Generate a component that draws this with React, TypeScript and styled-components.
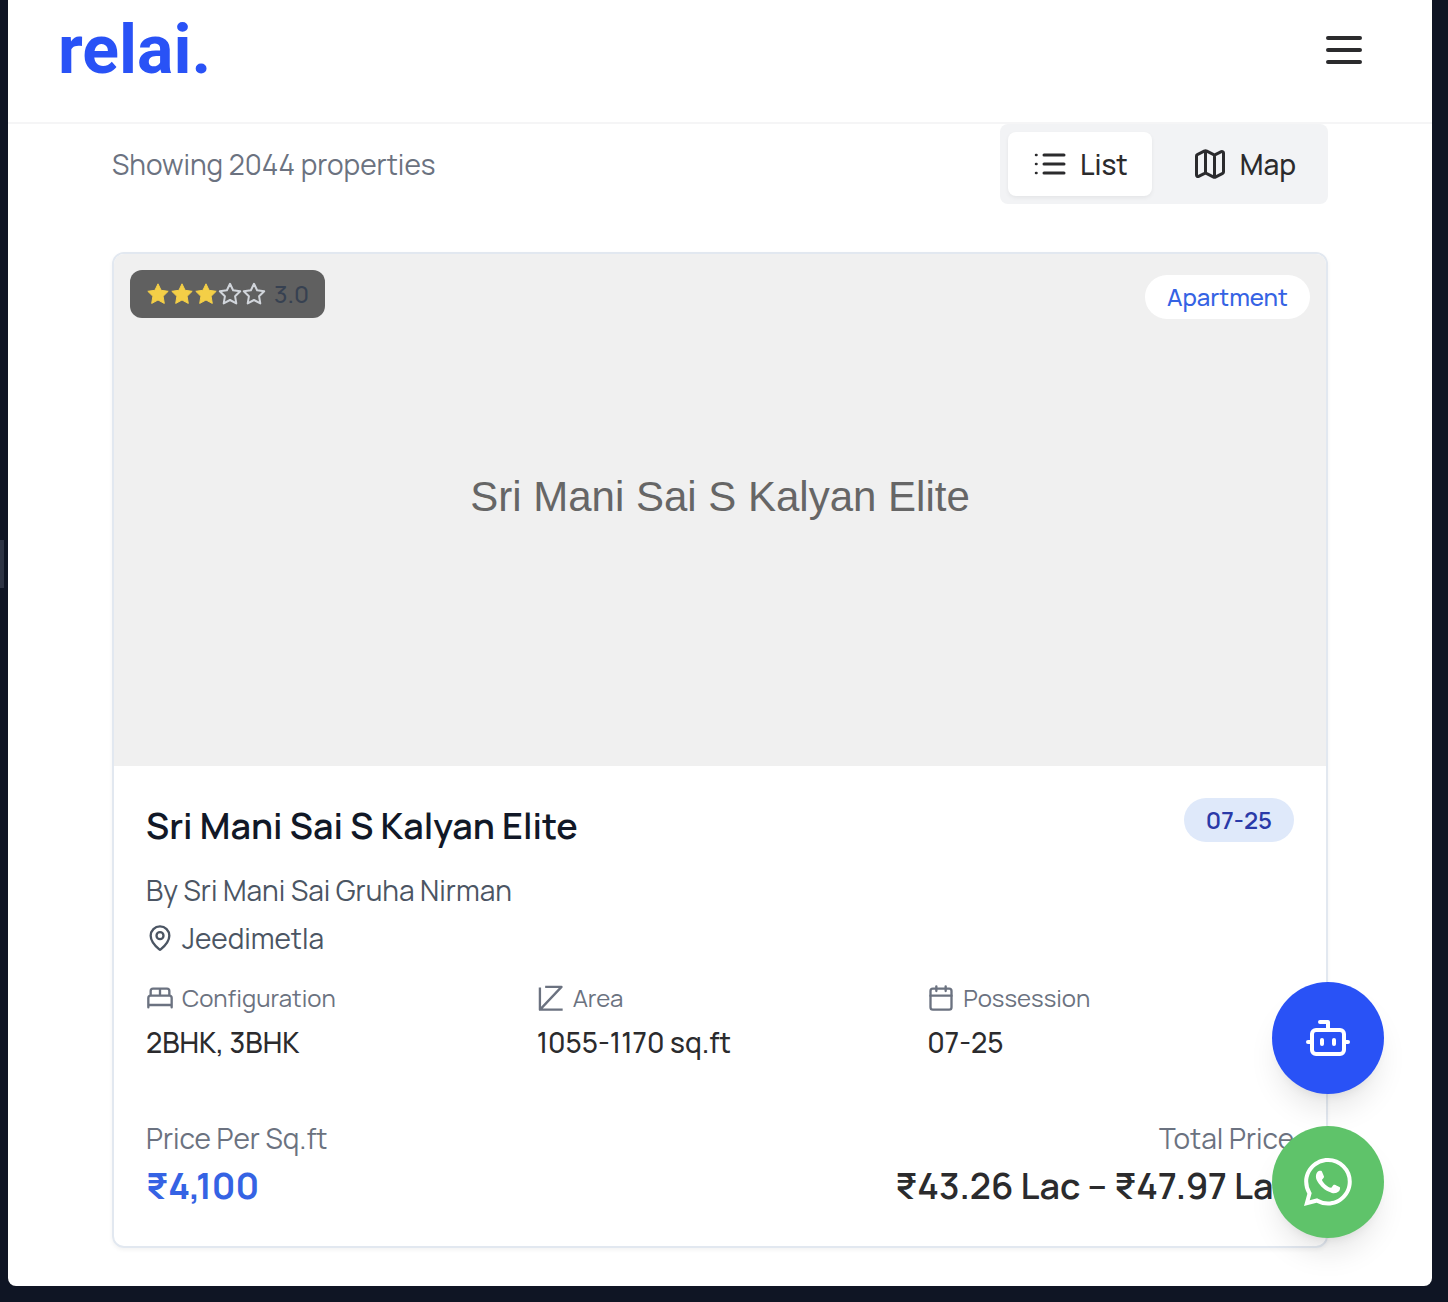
import React from "react";
import styled, { createGlobalStyle } from "styled-components";
import { Bot } from "lucide-react";
import { BsWhatsapp } from "react-icons/bs";

const GlobalStyle = createGlobalStyle`
  *, *::before, *::after { box-sizing: border-box; }
  body {
    margin: 0;
    background: #0f1524;
    color: #2b2b2d;
    font-family: Manrope, Inter, "Noto Sans", sans-serif;
    font-size: 28px;
    line-height: 40px;
  }
  button { font: inherit; color: inherit; border: 0; padding: 0; cursor: pointer; }
  h2, p, dl, dt, dd { margin: 0; font-weight: 400; }
  svg { display: block; flex: none; }
`;

const Frame = styled.div`
  display: flex;
  align-items: flex-start;
  min-height: 100vh;
  padding: 0 16px 16px 8px;
  position: relative;
`;

const EdgeHandle = styled.div`
  position: absolute;
  left: 0;
  top: 540px;
  width: 4px;
  height: 48px;
  background: #2d3344;
`;

const Page = styled.div`
  flex: 1;
  min-height: calc(100vh - 16px);
  background: #fff;
  border-radius: 0 0 8px 8px;
  position: relative;
`;

const Header = styled.header`
  display: flex;
  justify-content: space-between;
  align-items: flex-start;
  height: 124px;
  padding: 10px 64px 0 50px;
  border-bottom: 2px solid #f5f5f6;
`;

const Logo = styled.a`
  color: #2952f6;
  font-family: Roboto, sans-serif;
  font-size: 68px;
  line-height: 80px;
  font-weight: 700;
  text-decoration: none;
`;

const MenuButton = styled.button`
  margin-top: 16px;
  background: none;
`;

const Main = styled.main`
  padding: 0 104px 38px;
`;

const Toolbar = styled.div`
  display: flex;
  justify-content: space-between;
  align-items: center;
  margin-bottom: 48px;
  color: #6b7280;
`;

const Toggle = styled.div`
  display: flex;
  gap: 16px;
  padding: 8px;
  border-radius: 8px;
  background: #f2f3f5;
`;

const ToggleButton = styled.button<{ $active?: boolean }>`
  display: flex;
  align-items: center;
  gap: 12px;
  height: 64px;
  padding: 0 24px;
  border-radius: 8px;
  font-weight: 500;
  color: #2b2b2d;
  background: ${(p) => (p.$active ? "#fff" : "transparent")};
  box-shadow: ${(p) => (p.$active ? "0 2px 4px rgba(0, 0, 0, 0.06)" : "none")};
`;

const Card = styled.article`
  border: 2px solid #e2e8f0;
  border-radius: 12px;
  overflow: hidden;
  box-shadow: 0 2px 4px rgba(0, 0, 0, 0.05);
`;

const Cover = styled.div`
  position: relative;
  display: flex;
  align-items: center;
  justify-content: center;
  height: 512px;
  padding-bottom: 26px;
  background: #f0f0f0;
  color: #666;
  font-family: "Liberation Sans", Arial, sans-serif;
  font-size: 42px;
`;

const Rating = styled.div`
  position: absolute;
  top: 16px;
  left: 16px;
  display: flex;
  align-items: center;
  height: 48px;
  padding: 0 16px;
  border-radius: 12px;
  background: #606060;
  color: #374151;
  font-family: Manrope, Inter, sans-serif;
  font-size: 24px;
  font-weight: 500;
`;

const RatingValue = styled.span`
  margin-left: 8px;
`;

const Pill = styled.span<{ $solid?: boolean }>`
  display: flex;
  align-items: center;
  height: 44px;
  padding: 0 22px;
  border-radius: 22px;
  font-family: Manrope, Inter, sans-serif;
  font-size: 24px;
  font-weight: ${(p) => (p.$solid ? 600 : 500)};
  color: ${(p) => (p.$solid ? "#2a3aa8" : "#3563e4")};
  background: ${(p) => (p.$solid ? "#dfe9fa" : "#fff")};
`;

const PillCorner = styled.div`
  position: absolute;
  top: 21px;
  right: 16px;
`;

const Body = styled.div`
  padding: 32px;
`;

const TitleRow = styled.div`
  display: flex;
  justify-content: space-between;
  align-items: flex-start;
  margin-bottom: 16px;
`;

const Title = styled.h2`
  && { font-weight: 600; }
  font-size: 36px;
  line-height: 56px;
  color: #111827;
`;

const Line = styled.p`
  display: flex;
  align-items: center;
  gap: 8px;
  margin-bottom: 8px;
  color: #4b5563;
`;

const Facts = styled.dl`
  display: grid;
  grid-template-columns: repeat(3, 1fr);
  gap: 24px;
  margin: 24px 0 56px;
`;

const FactLabel = styled.dt`
  display: flex;
  align-items: center;
  gap: 8px;
  margin-bottom: 8px;
  font-size: 24px;
  line-height: 32px;
  color: #6b7280;
`;

const FactValue = styled.dd`
  && { font-weight: 500; }
`;

const Prices = styled.div`
  display: flex;
  justify-content: space-between;
`;

const Price = styled.div<{ $end?: boolean }>`
  text-align: ${(p) => (p.$end ? "right" : "left")};
`;

const PriceLabel = styled.p`
  color: #6b7280;
`;

const PriceValue = styled.p<{ $accent?: boolean }>`
  && { font-weight: ${(p) => (p.$accent ? 700 : 600)}; }
  font-size: 36px;
  line-height: 56px;
  color: ${(p) => (p.$accent ? "#3563e4" : "#2b2b2d")};
`;

const FloatingActions = styled.div`
  position: absolute;
  right: 48px;
  bottom: 48px;
  display: grid;
  gap: 32px;
`;

const RoundButton = styled.button<{ $color: string }>`
  display: grid;
  place-items: center;
  width: 112px;
  height: 112px;
  border-radius: 50%;
  color: #fff;
  background: ${(p) => p.$color};
  box-shadow: 0 20px 30px -6px rgba(0, 0, 0, 0.1), 0 8px 12px -8px rgba(0, 0, 0, 0.1);
`;

const STAR =
  "M12 1.8l3.1 6.5 7.1 1-5.1 5 1.2 7.1-6.3-3.4-6.3 3.4 1.2-7.1-5.1-5 7.1-1z";

const Star = ({ filled }: { filled: boolean }) => (
  <svg width="24" height="24" viewBox="0 0 24 24" aria-hidden="true">
    <path
      d={STAR}
      fill={filled ? "#f4cf47" : "none"}
      stroke={filled ? "#f4cf47" : "#d1d5db"}
      strokeWidth={filled ? 1 : 2}
      strokeLinejoin="round"
    />
  </svg>
);

const LineIcon = ({ size, children }: { size: number; children: React.ReactNode }) => (
  <svg
    width={size}
    height={size}
    viewBox="0 0 24 24"
    fill="none"
    stroke="currentColor"
    strokeWidth={2}
    strokeLinecap="round"
    strokeLinejoin="round"
    aria-hidden="true"
  >
    {children}
  </svg>
);

const BedIcon = () => (
  <LineIcon size={28}>
    <path d="M2 20v-8a2 2 0 0 1 2-2h16a2 2 0 0 1 2 2v8M4 10V6a2 2 0 0 1 2-2h12a2 2 0 0 1 2 2v4M12 4v6M2 18h20" />
  </LineIcon>
);

const AreaIcon = () => (
  <LineIcon size={28}>
    <path d="M2.5 3v19H22M7 2.5h14L3 21.5" strokeLinecap="butt" />
  </LineIcon>
);

const CalendarIcon = () => (
  <LineIcon size={28}>
    <rect x="3" y="4" width="18" height="18" rx="2" />
    <path d="M8 2v4M16 2v4M3 10h18" />
  </LineIcon>
);

const facts = [
  { label: "Configuration", value: "2BHK, 3BHK", icon: <BedIcon /> },
  { label: "Area", value: "1055-1170 sq.ft", icon: <AreaIcon /> },
  { label: "Possession", value: "07-25", icon: <CalendarIcon /> },
];

export default function App() {
  return (
    <Frame>
      <GlobalStyle />
      <EdgeHandle />
      <Page>
        <Header>
          <Logo href="#">relai.</Logo>
          <MenuButton aria-label="Open menu">
            <LineIcon size={48}>
              <path d="M4 6h16M4 12h16M4 18h16" />
            </LineIcon>
          </MenuButton>
        </Header>
        <Main>
          <Toolbar>
            <p>Showing 2044 properties</p>
            <Toggle>
              <ToggleButton $active aria-pressed="true">
                <svg width="36" height="36" viewBox="0 0 36 36" fill="none" stroke="currentColor" strokeLinecap="round" aria-hidden="true">
                  <path d="M12 9h20M12 18h20M12 27h20" strokeWidth="3" />
                  <path d="M4 9h.5M4 18h.5M4 27h.5" strokeWidth="2.5" />
                </svg>
                List
              </ToggleButton>
              <ToggleButton aria-pressed="false">
                <LineIcon size={36}>
                  <path d="M14.106 5.553a2 2 0 0 0 1.788 0l3.659-1.83A1 1 0 0 1 21 4.619v12.764a1 1 0 0 1-.553.894l-4.553 2.277a2 2 0 0 1-1.788 0l-4.212-2.106a2 2 0 0 0-1.788 0l-3.659 1.83A1 1 0 0 1 3 19.381V6.618a1 1 0 0 1 .553-.894l4.553-2.277a2 2 0 0 1 1.788 0zM15 5.764v15M9 3.236v15" />
                </LineIcon>
                Map
              </ToggleButton>
            </Toggle>
          </Toolbar>
          <Card>
            <Cover>
              Sri Mani Sai S Kalyan Elite
              <Rating>
                {[1, 2, 3, 4, 5].map((n) => (
                  <Star key={n} filled={n <= 3} />
                ))}
                <RatingValue>3.0</RatingValue>
              </Rating>
              <PillCorner>
                <Pill>Apartment</Pill>
              </PillCorner>
            </Cover>
            <Body>
              <TitleRow>
                <Title>Sri Mani Sai S Kalyan Elite</Title>
                <Pill $solid>07-25</Pill>
              </TitleRow>
              <Line>By Sri Mani Sai Gruha Nirman</Line>
              <Line>
                <LineIcon size={28}>
                  <path d="M20 10c0 4.99-5.54 10.19-7.4 11.8a1 1 0 0 1-1.2 0C9.54 20.19 4 14.99 4 10a8 8 0 0 1 16 0" />
                  <circle cx="12" cy="10" r="3" />
                </LineIcon>
                Jeedimetla
              </Line>
              <Facts>
                {facts.map((f) => (
                  <div key={f.label}>
                    <FactLabel>
                      {f.icon}
                      {f.label}
                    </FactLabel>
                    <FactValue>{f.value}</FactValue>
                  </div>
                ))}
              </Facts>
              <Prices>
                <Price>
                  <PriceLabel>Price Per Sq.ft</PriceLabel>
                  <PriceValue $accent>₹4,100</PriceValue>
                </Price>
                <Price $end>
                  <PriceLabel>Total Price</PriceLabel>
                  <PriceValue>₹43.26 Lac – ₹47.97 Lac</PriceValue>
                </Price>
              </Prices>
            </Body>
          </Card>
        </Main>
        <FloatingActions>
          <RoundButton $color="#2952f6" aria-label="Open assistant">
            <Bot size={48} />
          </RoundButton>
          <RoundButton $color="#5fc36a" aria-label="Chat on WhatsApp">
            <BsWhatsapp size={48} />
          </RoundButton>
        </FloatingActions>
      </Page>
    </Frame>
  );
}
